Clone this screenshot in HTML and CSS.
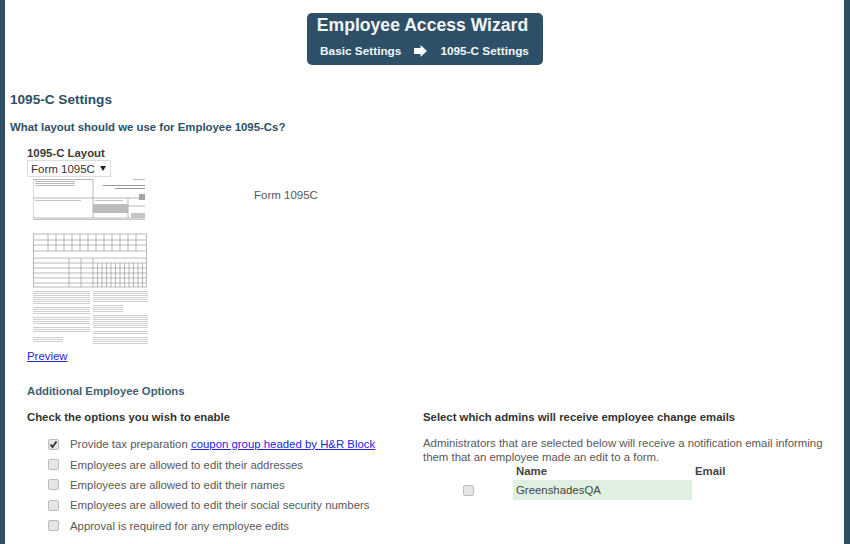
FILE: index.html
```html
<!DOCTYPE html>
<html lang="en">
<head>
<meta charset="utf-8">
<title>Employee Access Wizard</title>
<link rel="stylesheet" href="styles.css">
</head>
<body>
<div class="frame">
  <header class="wizard-wrap">
    <div class="wizard">
      <div class="wizard-title">Employee Access Wizard</div>
      <div class="wizard-steps">
        <span>Basic Settings</span>
        <svg class="arrow" width="13" height="12" viewBox="0 0 13 12"><path d="M0 3h6.500V0L13 6l-6.500 6V9H0z" fill="#fff"/></svg>
        <span>1095-C Settings</span>
      </div>
    </div>
  </header>

  <h1 class="page-title">1095-C Settings</h1>
  <h2 class="question">What layout should we use for Employee 1095-Cs?</h2>

  <section class="layout-block">
    <div class="layout-label">1095-C Layout</div>
    <div class="select"><span>Form 1095C</span><span class="caret"></span></div>
    <div class="form-row">
      <svg class="thumb thumb-a" width="115" height="45" viewBox="0 0 115 45">
        <defs>
          <pattern id="lines" width="4" height="2" patternUnits="userSpaceOnUse"><rect width="4" height="1" fill="#bbb"/></pattern>
        </defs>
        <g fill="none" stroke="#999" stroke-width=".7">
          <path d="M0 2.500H60V41M0 2.500V41H112M60 21H112M60 29H95M0 21H60M95 21V41M95 29H112"/>
        </g>
        <rect x="60" y="27" width="35" height="9" fill="#bcbcbc"/>
        <rect x="98" y="36" width="14" height="5" fill="#c4c4c4"/>
        <rect x="106" y="17" width="6" height="6" fill="#a4a4a4"/>
        <rect x="2" y="4" width="40" height="6" fill="url(#lines)"/>
        <rect x="2" y="23" width="46" height="1" fill="#c4c4c4"/>
        <rect x="70" y="8" width="42" height="1" fill="#999"/>
        <rect x="82" y="11" width="30" height="1" fill="#999"/>
        <rect x="100" y="2" width="12" height="1" fill="#bbb"/>
        <rect x="62" y="23" width="28" height="1" fill="#c4c4c4"/>
        <rect x="0" y="42" width="112" height="1" fill="#c4c4c4"/>
      </svg>
      <div class="form-name">Form 1095C</div>
    </div>
    <svg class="thumb thumb-b" width="116" height="113" viewBox="0 0 116 113">
      <defs>
        <pattern id="para" width="4" height="2" patternUnits="userSpaceOnUse"><rect width="4" height="1" fill="#cfcfcf"/></pattern>
      </defs>
      <g fill="none" stroke="#8a8a8a" stroke-width=".6">
        <rect x=".5" y="1" width="113" height="53"/>
        <path d="M.5 7H113M.5 12H113M.5 18H113M.5 25H113M.5 30H113M.5 35H113M.5 40H113M.5 45H113M.5 50H113"/>
        <path d="M15 1V18M23 1V18M31 1V18M39 1V18M47 1V18M55 1V18M63 1V18M71 1V18M79 1V18M87 1V18M95 1V18M103 1V18"/>
        <path d="M36 25V54M48 25V54M60 25V54M64.500 30V54M69 30V54M73.500 30V54M78 30V54M82.500 30V54M87 30V54M91.500 30V54M96 30V54M100.500 30V54M105 30V54M109.500 30V54"/>
      </g>
      <rect x="0" y="57" width="57" height="14" fill="url(#para)"/>
      <rect x="0" y="73" width="57" height="9" fill="url(#para)"/>
      <rect x="0" y="84" width="57" height="7" fill="url(#para)"/>
      <rect x="0" y="94" width="57" height="6" fill="url(#para)"/>
      <rect x="0" y="104" width="30" height="5" fill="url(#para)"/>
      <rect x="60" y="57" width="55" height="12" fill="url(#para)"/>
      <rect x="60" y="71" width="30" height="8" fill="url(#para)"/>
      <rect x="60" y="81" width="55" height="14" fill="url(#para)"/>
      <rect x="60" y="97" width="55" height="5" fill="url(#para)"/>
      <rect x="60" y="104" width="55" height="7" fill="url(#para)"/>
    </svg>
    <a class="link preview" href="#">Preview</a>
  </section>

  <section class="options">
    <h3 class="options-title">Additional Employee Options</h3>
    <div class="columns">
      <div class="col-left">
        <h4 class="col-title">Check the options you wish to enable</h4>
        <ul class="checks">
          <li><span class="box"><svg width="9" height="9" viewBox="0 0 9 9"><path d="M1.500 4.500l2 2.500L7.500 1.500" fill="none" stroke="#333" stroke-width="1.800"/></svg></span><span>Provide tax preparation <a class="link" href="#">coupon group headed by H&amp;R Block</a></span></li>
          <li><span class="box"></span><span>Employees are allowed to edit their addresses</span></li>
          <li><span class="box"></span><span>Employees are allowed to edit their names</span></li>
          <li><span class="box"></span><span>Employees are allowed to edit their social security numbers</span></li>
          <li><span class="box"></span><span>Approval is required for any employee edits</span></li>
        </ul>
      </div>
      <div class="col-right">
        <h4 class="col-title">Select which admins will receive employee change emails</h4>
        <p class="note">Administrators that are selected below will receive a notification email informing them that an employee made an edit to a form.</p>
        <div class="admin-table">
          <div></div><div class="th">Name</div><div class="th">Email</div>
          <div class="cell-check"><span class="box"></span></div><div class="td-name">GreenshadesQA</div><div></div>
        </div>
      </div>
    </div>
  </section>
</div>
</body>
</html>
```

FILE: styles.css
```css
* { box-sizing: border-box; }
html, body { margin: 0; height: 100%; overflow: hidden; }
body { background: #fff; font-family: "Liberation Sans", Arial, sans-serif; font-size: 11.4px; color: #585858; }
.frame { width: 850px; height: 544px; border-left: 5px solid #2d4f63; border-right: 6px solid #2d4f63; padding: 13px 0 0 5px; overflow: hidden; }
.wizard-wrap { display: flex; justify-content: center; margin-left: -5px; }
.wizard { width: 236px; height: 52px; background: #2d5068; border-radius: 5px; color: #f4f6f7; font-weight: bold; text-align: center; padding-top: 1px; }
.wizard-title { font-size: 17.6px; line-height: 22px; padding-right: 4px; }
.wizard-steps { display: flex; justify-content: center; align-items: center; gap: 13px; font-size: 11.8px; line-height: 16px; margin-top: 7px; }
.page-title { margin: 27px 0 0; font-size: 13.6px; line-height: 16px; color: #2d5068; font-weight: bold; }
.question { margin: 12px 0 0; font-size: 11.4px; line-height: 14px; color: #2d5068; font-weight: bold; }
.layout-block { margin: 12px 0 0 17px; }
.layout-label { font-size: 11.4px; line-height: 14px; font-weight: bold; color: #3a3a3a; }
.select { width: 84px; height: 17px; border: 1px solid #ddd; padding-left: 3px; color: #333; font-size: 11.5px; display: flex; align-items: center; gap: 5px; white-space: nowrap; }
.caret { width: 0; height: 0; border: 3px solid transparent; border-top: 5px solid #222; border-bottom: 0; }
.form-row { display: flex; align-items: flex-start; }
.thumb { display: block; margin-left: 6px; filter: blur(.6px); }
.form-name { margin: 11px 0 0 106px; line-height: 14px; font-size: 11.5px; }
.thumb-b { margin-top: 11px; }
.link { color: #2424dc; text-decoration: underline; }
.preview { display: block; line-height: 14px; margin-top: 3px; }
.options { margin: 21px 0 0 17px; }
.options-title { margin: 0; font-size: 11.3px; line-height: 14px; color: #3f5f72; font-weight: bold; }
.columns { display: flex; margin-top: 12px; }
.col-left { width: 396px; }
.col-right { width: 404px; }
.col-title { margin: 0; font-size: 11.35px; line-height: 14px; color: #333; font-weight: bold; }
.checks { list-style: none; margin: 10px 0 0; padding: 0 0 0 21px; }
.checks li { display: flex; align-items: center; height: 20.4px; white-space: nowrap; }
.box { display: inline-flex; align-items: center; justify-content: center; width: 11px; height: 11px; border: 1px solid #bcbcbc; border-radius: 2px; background: #e6e6e6; margin-right: 11px; flex: none; }
.note { margin: 12px 0 0; line-height: 14px; }
.admin-table { display: grid; grid-template-columns: 90px 179px 1fr; grid-template-rows: 16px 20px; }
.th { font-weight: bold; color: #444; line-height: 14px; padding-left: 3px; }
.cell-check { display: flex; align-items: center; padding-left: 40px; }
.cell-check .box { margin: 0; }
.td-name { background: #dff0e0; line-height: 20px; padding-left: 3px; color: #444; }
```
